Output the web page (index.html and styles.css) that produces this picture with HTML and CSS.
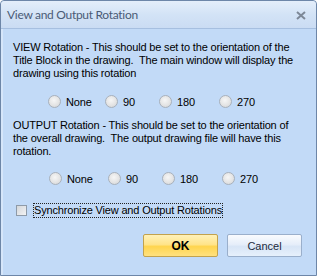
FILE: index.html
```html
<!DOCTYPE html>
<html>
<head>
<meta charset="utf-8">
<link rel="stylesheet" href="styles.css">
</head>
<body>
<div class="window">
  <div class="titlebar">
    <span class="title">View and Output Rotation</span>
    <svg class="close" width="10" height="9" viewBox="0 0 10 9"><path d="M1 1 L9 8 M9 1 L1 8" stroke="#7d8897" stroke-width="2" fill="none"/></svg>
  </div>
  <div class="content">
    <p class="desc">VIEW Rotation - This should be set to the orientation of the Title Block in the drawing.&nbsp; The main window will display the drawing using this rotation</p>
    <div class="radios row1">
      <label class="radio w1"><span class="dot"></span>None</label>
      <label class="radio w2"><span class="dot"></span>90</label>
      <label class="radio w3"><span class="dot"></span>180</label>
      <label class="radio"><span class="dot"></span>270</label>
    </div>
    <p class="desc second">OUTPUT Rotation - This should be set to the orientation of the overall drawing.&nbsp; The output drawing file will have this rotation.</p>
    <div class="radios row2">
      <label class="radio w1b"><span class="dot"></span>None</label>
      <label class="radio w2"><span class="dot"></span>90</label>
      <label class="radio w3"><span class="dot"></span>180</label>
      <label class="radio"><span class="dot"></span>270</label>
    </div>
    <div class="check-row">
      <span class="box"></span>
      <span class="focus">Synchronize View and Output Rotations</span>
    </div>
    <div class="buttons">
      <button class="btn ok">OK</button>
      <button class="btn cancel">Cancel</button>
    </div>
  </div>
</div>
</body>
</html>
```
FILE: styles.css
```css
html, body {
  margin: 0;
  padding: 0;
  background: #ffffff;
}
.window {
  width: 317px;
  height: 276px;
  box-sizing: border-box;
  border: 1px solid #6d86a8;
  border-radius: 4px 4px 0 0;
  background: #c2daf7;
  font-family: "Liberation Sans", Arial, sans-serif;
  font-size: 11px;
  letter-spacing: -0.17px;
  color: #000;
  overflow: hidden;
}
.titlebar {
  height: 27px;
  display: flex;
  align-items: center;
  justify-content: space-between;
  padding: 0 10px 0 6px;
  background: linear-gradient(#e4eefa, #d3e3f6 50%, #cadcf3);
  border-bottom: 1px solid #a6bfe0;
  border-radius: 3px 3px 0 0;
}
.title {
  font-family: Lato, "Open Sans", sans-serif;
  font-size: 12px;
  color: #4a5b76;
  letter-spacing: -0.3px;
}
.close {
  margin-top: 1px;
}
.content {
  padding: 12px 14px 0 10px;
  border-left: 2px solid #d6e6fa;
  height: 247px;
  box-sizing: border-box;
}
.desc {
  margin: 0;
  line-height: 13px;
}
.desc.second {
  margin-top: 11px;
}
.radios {
  display: flex;
  align-items: center;
  height: 13px;
  margin-top: 15px;
}
.row1 { padding-left: 35px; }
.row2 { padding-left: 36px; margin-top: 14px; }
.radio {
  display: flex;
  align-items: center;
  gap: 5px;
}
.w1 { width: 57px; }
.w1b { width: 59px; }
.w2 { width: 54px; }
.w3 { width: 60px; }
.dot {
  width: 11px;
  height: 11px;
  border-radius: 50%;
  border: 1px solid #a9b1bb;
  background: radial-gradient(circle at 45% 40%, #f6f6f6 0%, #e4e4e4 55%, #cfd2d6 100%);
  flex: none;
}
.check-row {
  display: flex;
  align-items: center;
  margin-top: 18px;
  height: 15px;
  padding-left: 3px;
}
.box {
  width: 9px;
  height: 9px;
  border: 1px solid #8e9aa8;
  background: linear-gradient(135deg, #d4d7db, #f2f3f4);
  margin-right: 6px;
  flex: none;
}
.focus {
  border: 1px dotted #222;
  line-height: 13px;
}
.buttons {
  display: flex;
  justify-content: flex-end;
  gap: 9px;
  margin-top: 16px;
}
.btn {
  width: 75px;
  height: 23px;
  box-sizing: border-box;
  font-family: "Liberation Sans", Arial, sans-serif;
  font-size: 11px;
  border-radius: 2px;
  padding: 0;
  color: #000;
}
.ok {
  font-weight: bold;
  font-size: 12px;
  border: 1px solid #c2a24d;
  background: linear-gradient(#fff1b8, #ffe48a 45%, #ffd54f 55%, #ffe17f);
}
.cancel {
  color: #1d2a3c;
  border: 1px solid #9aafcb;
  background: linear-gradient(#f9fbfe, #e6eefa 45%, #d8e5f6 55%, #e6f0fc);
}
```
